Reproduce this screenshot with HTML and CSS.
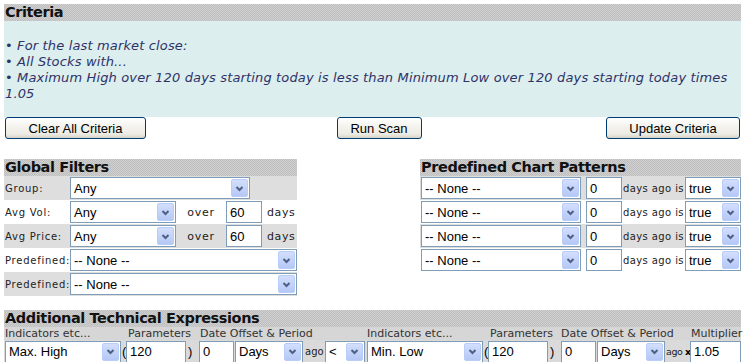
FILE: index.html
```html
<!DOCTYPE html>
<html>
<head>
<meta charset="utf-8">
<link rel="stylesheet" href="styles.css">
</head>
<body>
<div class="page">
  <section class="criteria">
    <div class="hdr">Criteria</div>
    <div class="crit-body">
      <div>• For the last market close:</div>
      <div>• All Stocks with...</div>
      <div>• Maximum High over 120 days starting today is less than Minimum Low over 120 days starting today times<br>1.05</div>
    </div>
  </section>

  <div class="buttons">
    <button class="btn b-clear">Clear All Criteria</button>
    <button class="btn b-run">Run Scan</button>
    <button class="btn b-update">Update Criteria</button>
  </div>

  <div class="panels">
    <section class="global">
      <div class="hdr">Global Filters</div>
      <div class="row gray">
        <span class="lbl">Group:</span>
        <span class="sel w180"><span class="v">Any</span><i class="dd"><svg viewBox="0 0 9 7"><path d="M1.5 2L4.5 5L7.5 2"/></svg></i></span>
      </div>
      <div class="row">
        <span class="lbl">Avg Vol:</span>
        <span class="sel w106"><span class="v">Any</span><i class="dd"><svg viewBox="0 0 9 7"><path d="M1.5 2L4.5 5L7.5 2"/></svg></i></span>
        <span class="over">over</span>
        <span class="inp w36">60</span>
        <span class="days">days</span>
      </div>
      <div class="row gray">
        <span class="lbl">Avg Price:</span>
        <span class="sel w106"><span class="v">Any</span><i class="dd"><svg viewBox="0 0 9 7"><path d="M1.5 2L4.5 5L7.5 2"/></svg></i></span>
        <span class="over">over</span>
        <span class="inp w36">60</span>
        <span class="days">days</span>
      </div>
      <div class="row">
        <span class="lbl">Predefined:</span>
        <span class="sel w227"><span class="v">-- None --</span><i class="dd"><svg viewBox="0 0 9 7"><path d="M1.5 2L4.5 5L7.5 2"/></svg></i></span>
      </div>
      <div class="row gray">
        <span class="lbl">Predefined:</span>
        <span class="sel w227"><span class="v">-- None --</span><i class="dd"><svg viewBox="0 0 9 7"><path d="M1.5 2L4.5 5L7.5 2"/></svg></i></span>
      </div>
    </section>

    <section class="patterns">
      <div class="hdr">Predefined Chart Patterns</div>
      <div class="prow gray">
        <span class="sel w160"><span class="v">-- None --</span><i class="dd"><svg viewBox="0 0 9 7"><path d="M1.5 2L4.5 5L7.5 2"/></svg></i></span>
        <span class="inp w36 ml5">0</span>
        <span class="ago">days ago is</span>
        <span class="sel w56"><span class="v">true</span><i class="dd"><svg viewBox="0 0 9 7"><path d="M1.5 2L4.5 5L7.5 2"/></svg></i></span>
      </div>
      <div class="prow">
        <span class="sel w160"><span class="v">-- None --</span><i class="dd"><svg viewBox="0 0 9 7"><path d="M1.5 2L4.5 5L7.5 2"/></svg></i></span>
        <span class="inp w36 ml5">0</span>
        <span class="ago">days ago is</span>
        <span class="sel w56"><span class="v">true</span><i class="dd"><svg viewBox="0 0 9 7"><path d="M1.5 2L4.5 5L7.5 2"/></svg></i></span>
      </div>
      <div class="prow gray">
        <span class="sel w160"><span class="v">-- None --</span><i class="dd"><svg viewBox="0 0 9 7"><path d="M1.5 2L4.5 5L7.5 2"/></svg></i></span>
        <span class="inp w36 ml5">0</span>
        <span class="ago">days ago is</span>
        <span class="sel w56"><span class="v">true</span><i class="dd"><svg viewBox="0 0 9 7"><path d="M1.5 2L4.5 5L7.5 2"/></svg></i></span>
      </div>
      <div class="prow">
        <span class="sel w160"><span class="v">-- None --</span><i class="dd"><svg viewBox="0 0 9 7"><path d="M1.5 2L4.5 5L7.5 2"/></svg></i></span>
        <span class="inp w36 ml5">0</span>
        <span class="ago">days ago is</span>
        <span class="sel w56"><span class="v">true</span><i class="dd"><svg viewBox="0 0 9 7"><path d="M1.5 2L4.5 5L7.5 2"/></svg></i></span>
      </div>
    </section>
  </div>

  <section class="additional">
    <div class="hdr">Additional Technical Expressions</div>
    <div class="xgrid">
      <span class="xl c1">Indicators etc...</span>
      <span class="xl c3">Parameters</span>
      <span class="xl c5">Date Offset &amp; Period</span>
      <span class="xl c10">Indicators etc...</span>
      <span class="xl c12">Parameters</span>
      <span class="xl c14">Date Offset &amp; Period</span>
      <span class="xl c17">Multiplier</span>

      <span class="cell"><span class="sel w116 ml1"><span class="v">Max. High</span><i class="dd"><svg viewBox="0 0 9 7"><path d="M1.5 2L4.5 5L7.5 2"/></svg></i></span></span>
      <span class="cell par">(</span>
      <span class="cell"><span class="inp w60">120</span></span>
      <span class="cell par pr">)</span>
      <span class="cell"><span class="inp w35">0</span></span>
      <span class="cell"><span class="sel w68 ml1"><span class="v">Days</span><i class="dd"><svg viewBox="0 0 9 7"><path d="M1.5 2L4.5 5L7.5 2"/></svg></i></span></span>
      <span class="cell sm">ago</span>
      <span class="cell"><span class="sel w40"><span class="v">&lt;</span><i class="dd"><svg viewBox="0 0 9 7"><path d="M1.5 2L4.5 5L7.5 2"/></svg></i></span></span>
      <span class="cell"><span class="sel w116"><span class="v">Min. Low</span><i class="dd"><svg viewBox="0 0 9 7"><path d="M1.5 2L4.5 5L7.5 2"/></svg></i></span></span>
      <span class="cell par">(</span>
      <span class="cell"><span class="inp w60">120</span></span>
      <span class="cell par pr">)</span>
      <span class="cell"><span class="inp w35">0</span></span>
      <span class="cell"><span class="sel w68 ml1"><span class="v">Days</span><i class="dd"><svg viewBox="0 0 9 7"><path d="M1.5 2L4.5 5L7.5 2"/></svg></i></span></span>
      <span class="cell sm tight">ago</span>
      <span class="cell times">x</span>
      <span class="cell"><span class="inp w51">1.05</span></span>
    </div>
  </section>
</div>
</body>
</html>
```

FILE: styles.css
```css
* { box-sizing: border-box; }
html, body { margin: 0; padding: 0; background: #fff; }
body { width: 744px; height: 362px; overflow: hidden; font-family: "DejaVu Sans", Verdana, sans-serif; color: #000; }
.page { padding: 4px 3px 0 4px; }

.hdr {
  height: 17px;
  line-height: 17px;
  font-size: 14.5px;
  letter-spacing: -0.4px;
  font-weight: bold;
  color: #111;
  padding-left: 1px;
  background-color: #c6c6c6;
  background-image: repeating-conic-gradient(#bebebe 0 25%, #d0d0d0 0 50%);
  background-size: 2px 2px;
  white-space: nowrap;
}

.crit-body {
  background: #ddeeee;
  height: 96px;
  padding: 17px 0 0 1px;
  font-size: 13px;
  line-height: 16px;
  letter-spacing: 0.15px;
  font-style: italic;
  color: #2e3268;
}

.buttons {
  display: flex;
  justify-content: space-between;
  padding: 0 1px 0 1px;
}
.btn {
  height: 22px;
  border: 1px solid #003c74;
  border-radius: 3px;
  background: linear-gradient(#ffffff 0%, #f4f3ee 40%, #ecebe4 80%, #d8d3c6 100%);
  font-family: "Liberation Sans", Arial, sans-serif;
  font-size: 13px;
  color: #000;
  padding: 0;
}
.b-clear { width: 141px; }
.b-run { width: 85px; margin-left: 6px; }
.b-update { width: 134px; }

.panels {
  display: flex;
  justify-content: space-between;
  margin-top: 20px;
}
.global { width: 293px; }
.patterns { width: 321px; }

.row, .prow {
  height: 24px;
  display: flex;
  align-items: center;
  font-size: 11px;
  color: #222;
}
.row.gray, .prow.gray { background: #dedede; }
.lbl { width: 66px; padding-left: 1px; font-size: 10px; letter-spacing: 0.75px; white-space: nowrap; }
.over { width: 50px; text-align: center; letter-spacing: 0.7px; }
.days { margin-left: 5px; letter-spacing: 0.6px; }
.ago { width: 63px; padding-left: 1px; font-size: 10px; white-space: nowrap; letter-spacing: 0.4px; }
.prow .sel:first-child { margin-left: 1px; }

.sel, .inp {
  display: inline-flex;
  align-items: center;
  height: 22px;
  border: 1px solid #7f9db9;
  background: #fff;
  font-family: "Liberation Sans", Arial, sans-serif;
  font-size: 13px;
  color: #000;
  white-space: nowrap;
  flex: none;
}
.sel .v { flex: 1; padding-left: 3px; overflow: hidden; }
.inp { padding-left: 3px; }
.dd {
  flex: none;
  width: 17px;
  height: 18px;
  margin-right: 1px;
  border: 1px solid #b9cdf8;
  border-radius: 2px;
  background: linear-gradient(#d2defc, #b5c8f6);
  display: flex;
  align-items: center;
  justify-content: center;
}
.dd svg { width: 9px; height: 7px; }
.dd path { fill: none; stroke: #4d6185; stroke-width: 2; }

.w180 { width: 180px; }
.w106 { width: 106px; }
.w227 { width: 227px; }
.w160 { width: 160px; }
.w56 { width: 56px; }
.w36 { width: 36px; }
.w116 { width: 116px; }
.w60 { width: 60px; }
.w35 { width: 35px; }
.w68 { width: 68px; }
.w40 { width: 40px; }
.w51 { width: 51px; }
.ml5 { margin-left: 5px; }
.ml1 { margin-left: 1px; }

.additional { margin-top: 14px; }
.xgrid {
  display: grid;
  grid-template-columns: 117px 5px 60px 13px 35px 69px 22px 42px 116px 5px 60px 13px 35px 69px 18px 7px 51px;
  grid-template-rows: 13px 23px;
  background: #dadada;
}
.xl {
  grid-row: 1;
  font-size: 11px;
  line-height: 13px;
  color: #333;
  white-space: nowrap;
  background-color: #d6d6d6;
}
.c1 { grid-column: 1 / 3; padding-left: 1px; }
.c3 { grid-column: 3 / 5; padding-left: 2px; }
.c5 { grid-column: 5 / 9; padding-left: 1px; }
.c10 { grid-column: 9 / 11; }
.c12 { grid-column: 11 / 13; padding-left: 2px; }
.c14 { grid-column: 13 / 16; }
.c17 { grid-column: 16 / 18; padding-left: 8px; }
.cell {
  grid-row: 2;
  display: flex;
  align-items: center;
  font-size: 13px;
  font-family: "Liberation Sans", Arial, sans-serif;
}
.par { padding-left: 1px; }
.pr { padding-left: 2px; }
.sm { font-family: "DejaVu Sans", Verdana, sans-serif; font-size: 10px; padding-left: 2px; color: #222; }
.sm.tight { padding-left: 1px; font-size: 9.5px; letter-spacing: -0.4px; }
.times { font-family: "DejaVu Sans", Verdana, sans-serif; font-size: 9.5px; font-weight: bold; padding-left: 2px; }
```
